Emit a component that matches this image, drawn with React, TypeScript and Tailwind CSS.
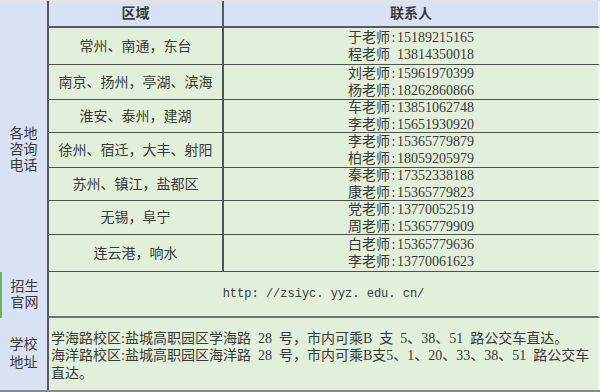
import React from 'react';

const CONTACTS: { area: string; people: string[] }[] = [
  { area: '常州、南通，东台', people: ['于老师:15189215165', '程老师 13814350018'] },
  { area: '南京、扬州，亭湖、滨海', people: ['刘老师:15961970399', '杨老师:18262860866'] },
  { area: '淮安、泰州，建湖', people: ['车老师:13851062748', '李老师:15651930920'] },
  { area: '徐州、宿迁，大丰、射阳', people: ['李老师:15365779879', '柏老师:18059205979'] },
  { area: '苏州、镇江，盐都区', people: ['秦老师:17352338188', '康老师:15365779823'] },
  { area: '无锡，阜宁', people: ['党老师:13770052519', '周老师:15365779909'] },
  { area: '连云港，响水', people: ['白老师:15365779636', '李老师:13770061623'] },
];

// half-width colon in the original is as wide as a digit
const Phone = ({ text }: { text: string }) => {
  const sep = text.includes(':') ? ':' : ' ';
  const [name, num] = text.split(sep);
  return (
    <div>
      {name}
      <span className="inline-block w-[7px] text-center">{sep === ':' ? ':' : '\u00a0'}</span>
      {num}
    </div>
  );
};

export default function App() {
  return (
    <div className="w-[600px] h-[392px] bg-[#e2efda] text-[14px] text-[#3a3a3a] font-['Liberation_Serif','Noto_Sans_CJK_SC',serif] overflow-hidden">
      {/* thin strip on top */}
      <div className="h-px bg-[#e6e3dc]" />

      <div className="grid grid-cols-[49px_175px_1fr] grid-rows-[27px_37px_35px_33px_35px_33px_34px_37px_46px_72px]">
        {/* header */}
        <div className="bg-[#d9e1f4] border-r-2 border-[#565b63]" />
        <div className="bg-[#d9e1f4] border-r-2 border-b-2 border-[#565b63] flex items-center justify-center font-bold">
          区域
        </div>
        <div className="bg-[#d9e1f4] border-b-2 border-b-[#565b63] border-r-2 border-r-white/50 flex items-center justify-center font-bold">
          联系人
        </div>

        {/* left label spanning the phone rows */}
        <div className="row-span-7 bg-[#d9e1f4] border-r-2 border-[#565b63] flex items-center justify-center text-center leading-[16px]">
          各地<br />咨询<br />电话
        </div>

        {CONTACTS.map((c, i) => (
          <React.Fragment key={i}>
            <div className="border-r-2 border-r-[#4f545a] border-b border-b-[#4f4f4f] flex items-center justify-center whitespace-nowrap">
              {c.area}
            </div>
            <div className="border-b border-b-[#4f4f4f] border-r-2 border-r-white/50 flex items-center justify-center">
              <div className="text-left leading-[17px] whitespace-nowrap">
                {c.people.map((p) => (
                  <Phone key={p} text={p} />
                ))}
              </div>
            </div>
          </React.Fragment>
        ))}

        {/* website */}
        <div className="bg-[#d9e1f4] border-r-2 border-r-[#565b63] border-l-2 border-l-[#76b05c] flex items-center justify-center text-center leading-[16px]">
          招生<br />官网
        </div>
        <div className="col-span-2 border-b-2 border-b-[#6e7270] border-r-2 border-r-white/50 flex items-center justify-center font-['Liberation_Mono',monospace] text-[12px]">
          http: //zsiyc. yyz. edu. cn/
        </div>

        {/* address */}
        <div className="bg-[#d9e1f4] border-r-2 border-[#565b63] flex items-center justify-center text-center leading-[18px]">
          学校<br />地址
        </div>
        <div className="col-span-2 border-r-2 border-r-white/50 flex flex-col justify-center pl-[2px] pt-[4px] leading-[17.5px] whitespace-nowrap">
          <div>学海路校区:盐城高职园区学海路{'\u2002'}28{'\u2002'}号，市内可乘B{'\u2002'}支{'\u2002'}5、38、51{'\u2002'}路公交车直达。</div>
          <div>海洋路校区:盐城高职园区海洋路{'\u2002'}28{'\u2002'}号，市内可乘B支5、1、20、33、38、51{'\u2002'}路公交车</div>
          <div>直达。</div>
        </div>
      </div>

      {/* bottom edge */}
      <div className="h-[2px] bg-[#8a8a86]" />
    </div>
  );
}
